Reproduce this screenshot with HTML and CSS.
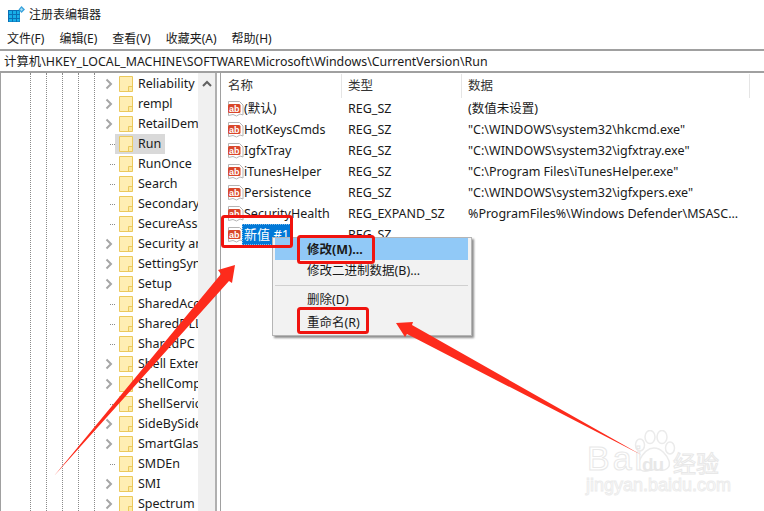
FILE: index.html
```html
<!DOCTYPE html>
<html lang="zh-CN">
<head>
<meta charset="utf-8">
<title>注册表编辑器</title>
<link rel="stylesheet" href="styles.css">
</head>
<body>
<svg class="defs" width="0" height="0" aria-hidden="true">
  <symbol id="folder" viewBox="0 0 14 16">
    <path d="M.5 .5H13.5V15.5H.5Z" fill="#fde9a0" stroke="#ebc95c"/>
    <path d="M1 1H13V10H9.5V15H1Z" fill="#ffeeb3"/>
    <path d="M9.5 15V10.5H13" fill="none" stroke="#ebc95c"/>
  </symbol>
  <symbol id="chev" viewBox="0 0 8 12">
    <path d="M1.5 1.5L6 6L1.5 10.500" fill="none" stroke="#a6a6a6" stroke-width="2"/>
  </symbol>
  <symbol id="ab" viewBox="0 0 17 16">
    <path d="M1.500 .5H12.500L16 4V14L13 13L9.500 15L6 13.500L1.500 14.500Z" fill="#fff" stroke="#b5b5b5"/>
    <rect x="1" y="3" width="12.500" height="9" rx="1.500" fill="#d9472b"/>
    <text x="7.200" y="10.500" class="abtext">ab</text>
  </symbol>
</svg>

<header class="titlebar">
  <svg class="appicon" width="17" height="16" viewBox="0 0 17 16" aria-hidden="true">
    <path d="M0 4H12V16H0Z" fill="#0a6fb5"/>
    <path d="M1 5H4V8H1ZM5 5H8V8H5ZM9 5H11.500V8H9ZM1 9H4V12H1ZM5 9H8V12H5ZM9 9H11.500V12H9ZM1 13H4V15.500H1ZM5 13H8V15.500H5ZM9 13H11.500V15.500H9Z" fill="#17aee8"/>
    <path d="M13.500 0L17 3.500L13.500 7L10.500 3.500Z" fill="#3aa3dc"/>
    <path d="M13.500 2L15 3.500L13.500 5L12 3.500Z" fill="#a9def5"/>
  </svg>
  <span>注册表编辑器</span>
</header>

<nav class="menubar">
  <span>文件(F)</span><span>编辑(E)</span><span>查看(V)</span><span>收藏夹(A)</span><span>帮助(H)</span>
</nav>

<div class="address">计算机\HKEY_LOCAL_MACHINE\SOFTWARE\Microsoft\Windows\CurrentVersion\Run</div>

<main class="panes">
  <section class="tree">
    <div class="guides"><i></i><i></i><i></i><i></i><i></i></div>
    <div class="rows">
      <div class="row"><svg class="chev"><use href="#chev"/></svg><span class="node"><svg class="folder"><use href="#folder"/></svg><span>Reliability</span></span></div>
      <div class="row"><svg class="chev"><use href="#chev"/></svg><span class="node"><svg class="folder"><use href="#folder"/></svg><span>rempl</span></span></div>
      <div class="row"><svg class="chev"><use href="#chev"/></svg><span class="node"><svg class="folder"><use href="#folder"/></svg><span>RetailDemo</span></span></div>
      <div class="row"><b class="dash"></b><span class="node current"><svg class="folder"><use href="#folder"/></svg><span>Run</span></span></div>
      <div class="row"><b class="dash"></b><span class="node"><svg class="folder"><use href="#folder"/></svg><span>RunOnce</span></span></div>
      <div class="row"><b class="dash"></b><span class="node"><svg class="folder"><use href="#folder"/></svg><span>Search</span></span></div>
      <div class="row"><b class="dash"></b><span class="node"><svg class="folder"><use href="#folder"/></svg><span>Secondary Authentication</span></span></div>
      <div class="row"><b class="dash"></b><span class="node"><svg class="folder"><use href="#folder"/></svg><span>SecureAssessment</span></span></div>
      <div class="row"><svg class="chev"><use href="#chev"/></svg><span class="node"><svg class="folder"><use href="#folder"/></svg><span>Security and Maintenance</span></span></div>
      <div class="row"><svg class="chev"><use href="#chev"/></svg><span class="node"><svg class="folder"><use href="#folder"/></svg><span>SettingSync</span></span></div>
      <div class="row"><svg class="chev"><use href="#chev"/></svg><span class="node"><svg class="folder"><use href="#folder"/></svg><span>Setup</span></span></div>
      <div class="row"><b class="dash"></b><span class="node"><svg class="folder"><use href="#folder"/></svg><span>SharedAccess</span></span></div>
      <div class="row"><b class="dash"></b><span class="node"><svg class="folder"><use href="#folder"/></svg><span>SharedDLLs</span></span></div>
      <div class="row"><b class="dash"></b><span class="node"><svg class="folder"><use href="#folder"/></svg><span>SharedPC</span></span></div>
      <div class="row"><svg class="chev"><use href="#chev"/></svg><span class="node"><svg class="folder"><use href="#folder"/></svg><span>Shell Extensions</span></span></div>
      <div class="row"><svg class="chev"><use href="#chev"/></svg><span class="node"><svg class="folder"><use href="#folder"/></svg><span>ShellCompatibility</span></span></div>
      <div class="row"><b class="dash"></b><span class="node"><svg class="folder"><use href="#folder"/></svg><span>ShellServiceObject</span></span></div>
      <div class="row"><svg class="chev"><use href="#chev"/></svg><span class="node"><svg class="folder"><use href="#folder"/></svg><span>SideBySide</span></span></div>
      <div class="row"><svg class="chev"><use href="#chev"/></svg><span class="node"><svg class="folder"><use href="#folder"/></svg><span>SmartGlass</span></span></div>
      <div class="row"><b class="dash"></b><span class="node"><svg class="folder"><use href="#folder"/></svg><span>SMDEn</span></span></div>
      <div class="row"><svg class="chev"><use href="#chev"/></svg><span class="node"><svg class="folder"><use href="#folder"/></svg><span>SMI</span></span></div>
      <div class="row"><svg class="chev"><use href="#chev"/></svg><span class="node"><svg class="folder"><use href="#folder"/></svg><span>Spectrum</span></span></div>
    </div>
  </section>
  <div class="scrollbar">
    <svg width="10" height="8" viewBox="0 0 10 8" aria-hidden="true"><path d="M1 6L5 2L9 6" fill="none" stroke="#606060" stroke-width="2"/></svg>
  </div>
  <div class="splitter"></div>
  <section class="list">
    <div class="head">
      <span class="col1">名称</span><span class="col2">类型</span><span class="col3">数据</span>
    </div>
    <div class="item"><span class="col1"><svg class="abicon"><use href="#ab"/></svg><span>(默认)</span></span><span class="col2">REG_SZ</span><span class="col3">(数值未设置)</span></div>
    <div class="item"><span class="col1"><svg class="abicon"><use href="#ab"/></svg><span>HotKeysCmds</span></span><span class="col2">REG_SZ</span><span class="col3">"C:\WINDOWS\system32\hkcmd.exe"</span></div>
    <div class="item"><span class="col1"><svg class="abicon"><use href="#ab"/></svg><span>IgfxTray</span></span><span class="col2">REG_SZ</span><span class="col3">"C:\WINDOWS\system32\igfxtray.exe"</span></div>
    <div class="item"><span class="col1"><svg class="abicon"><use href="#ab"/></svg><span>iTunesHelper</span></span><span class="col2">REG_SZ</span><span class="col3">"C:\Program Files\iTunesHelper.exe"</span></div>
    <div class="item"><span class="col1"><svg class="abicon"><use href="#ab"/></svg><span>Persistence</span></span><span class="col2">REG_SZ</span><span class="col3">"C:\WINDOWS\system32\igfxpers.exe"</span></div>
    <div class="item"><span class="col1"><svg class="abicon"><use href="#ab"/></svg><span>SecurityHealth</span></span><span class="col2">REG_EXPAND_SZ</span><span class="col3">%ProgramFiles%\Windows Defender\MSASC...</span></div>
    <div class="item"><span class="col1"><svg class="abicon"><use href="#ab"/></svg><span class="editing">新值 #1</span></span><span class="col2">REG_SZ</span><span class="col3"></span></div>
  </section>
</main>

<div class="watermark" aria-hidden="true">
  <svg class="paw" width="46" height="46" viewBox="0 0 46 46">
    <g fill="#fff" stroke="#ebebeb" stroke-width="1.500">
      <ellipse cx="8" cy="15" rx="4.500" ry="6"/>
      <ellipse cx="18" cy="7" rx="5" ry="6.500"/>
      <ellipse cx="30" cy="7" rx="5" ry="6.500"/>
      <ellipse cx="38" cy="18" rx="4.500" ry="6"/>
      <path d="M22 18C29 18 35 25 37 31C39 38 33 41 28 40C24 39 20 39 15 41C8 42 4 37 7 31C10 25 15 18 22 18Z"/>
    </g>
  </svg>
  <span class="wm-bai">Bai</span>
  <span class="wm-du">du</span>
  <span class="wm-jy">经验</span>
  <span class="wm-url">jingyan.baidu.com</span>
</div>

<div class="menu">
  <div class="mi active">修改(M)...</div>
  <div class="mi">修改二进制数据(B)...</div>
  <div class="sep"></div>
  <div class="mi">删除(D)</div>
  <div class="mi">重命名(R)</div>
</div>

<svg class="marks" width="764" height="511" viewBox="0 0 764 511" aria-hidden="true">
  <g fill="none" stroke="#f0140f" stroke-width="3">
    <rect x="222.500" y="216.500" width="69" height="30" rx="2"/>
    <rect x="298.500" y="236.500" width="75" height="26" rx="2"/>
    <rect x="298.500" y="308.500" width="69" height="24" rx="2"/>
  </g>
  <g fill="#fd2b1c">
    <polygon points="54,476 221,274 218,270 235,265 232,283 229,281"/>
    <polygon points="641.500,455 412,325 413,322 396,323 405,337 407,334"/>
  </g>
</svg>
</body>
</html>
```
FILE: styles.css
```css
* { box-sizing: border-box; }
html, body { margin: 0; padding: 0; }
body {
  position: relative;
  width: 764px;
  height: 511px;
  overflow: hidden;
  background: #fff;
  color: #1a1a1a;
  font: 12px/16px "Noto Sans", "Noto Sans CJK SC", sans-serif;
  display: flex;
  flex-direction: column;
}
.defs { position: absolute; }
.abtext { font: bold 9px "Liberation Sans", sans-serif; fill: #fff; text-anchor: middle; }

.titlebar {
  height: 28px;
  flex: none;
  display: flex;
  align-items: center;
  gap: 4px;
  padding: 0 0 0 8px;
  font-family: "Noto Sans CJK SC", sans-serif;
}
.appicon { flex: none; }

.menubar {
  height: 21px;
  flex: none;
  display: flex;
  gap: 15px;
  align-items: center;
  padding-left: 7px;
}

.address {
  height: 24px;
  flex: none;
  border-top: 2px solid #a0a0a0;
  border-bottom: 2px solid #a0a0a0;
  padding-left: 4px;
  font-size: 12.400px;
  line-height: 21px;
  white-space: nowrap;
  overflow: hidden;
}

.panes { flex: 1; display: flex; min-height: 0; }

.tree {
  width: 198px;
  flex: none;
  display: flex;
  border-left: 1px solid #a0a0a0;
  overflow: hidden;
}
.guides { flex: none; display: flex; padding-left: 29px; }
.guides i { width: 16px; border-left: 1px dotted #8a8a8a; }
.rows { flex: none; width: 200px; padding-top: 1px; }
.row { height: 20px; display: flex; align-items: center; white-space: nowrap; font-size: 12.500px; }
.chev { width: 8px; height: 12px; margin: 0 2px 0 -5px; flex: none; }
.dash { width: 5px; height: 0; border-top: 1px dotted #8a8a8a; flex: none; }
.node { display: flex; align-items: center; height: 20px; padding: 0 4px; gap: 5px; }
.node.current { background: #d9d9d9; }
.folder { width: 14px; height: 16px; flex: none; }

.scrollbar {
  width: 17px;
  flex: none;
  background: #f0f0f0;
  display: flex;
  justify-content: center;
  padding-top: 7px;
}
.scrollbar svg { display: block; }

.splitter {
  width: 6px;
  flex: none;
  border-left: 2px solid #b0b0b0;
  border-right: 1px solid #a0a0a0;
}

.list { flex: 1; min-width: 0; font-size: 12.500px; padding-top: 1px; }
.head { height: 24px; display: flex; align-items: center; color: #333; }
.head span { height: 24px; line-height: 24px; border-right: 1px solid #e5e5e5; }
.item { height: 21px; display: flex; align-items: center; white-space: nowrap; }
.col1 { width: 121px; flex: none; padding-left: 7px; display: flex; align-items: center; }
.item .col1 { padding-left: 6px; }
.col2 { width: 120px; flex: none; padding-left: 6px; }
.col3 { padding-left: 6px; }
.head .col3 { width: 288px; flex: none; }
.abicon { width: 17px; height: 16px; flex: none; }
.editing {
  background: #0078d7;
  color: #fff;
  height: 21px;
  line-height: 21px;
  margin-left: -2px;
  padding: 0 2px;
  width: 49px;
  overflow: hidden;
  outline: 1px dotted #7fbbe9;
  outline-offset: -1px;
  font-size: 13px;
}

.watermark {
  position: absolute;
  left: 586px;
  top: 430px;
  width: 140px;
  height: 68px;
  color: #fff;
}
.paw { position: absolute; left: 46px; top: 0; }
.wm-bai, .wm-du, .wm-jy, .wm-url { position: absolute; white-space: nowrap; }
.wm-bai {
  left: 1px; top: 8px;
  font: 34px/40px "Liberation Sans", sans-serif;
  -webkit-text-stroke: 1px #e8e8e8;
  letter-spacing: 3px;
}
.wm-du { left: 56px; top: 24px; font: bold 19px/22px "Liberation Sans", sans-serif; color: #e8e8e8; letter-spacing: -1px; }
.wm-jy {
  left: 87px; top: 19px;
  font: 23px/26px "Noto Sans CJK SC", sans-serif;
  -webkit-text-stroke: 1px #e8e8e8;
}
.wm-url {
  left: 0; top: 45px;
  font: 18px/20px "Liberation Sans", sans-serif;
  color: #fff;
  -webkit-text-stroke: 1px #ececec;
}

.menu {
  position: absolute;
  left: 272px;
  top: 237px;
  width: 200px;
  height: 99px;
  background: #f2f2f2;
  border: 1px solid #b5b5b5;
  box-shadow: 2px 2px 2px #8f8f8f;
  padding: 0 3px 0 2px;
  font-size: 12.500px;
}
.mi { height: 22px; line-height: 22px; padding-left: 32px; white-space: nowrap; }
.mi.active { background: #91c9f7; font-weight: 700; line-height: 23px; }
.sep { height: 1px; margin: 3px 0 3px 0; background: #d0d0d0; }
.sep + .mi { margin-bottom: 1px; }

.marks { position: absolute; left: 0; top: 0; pointer-events: none; }
```
